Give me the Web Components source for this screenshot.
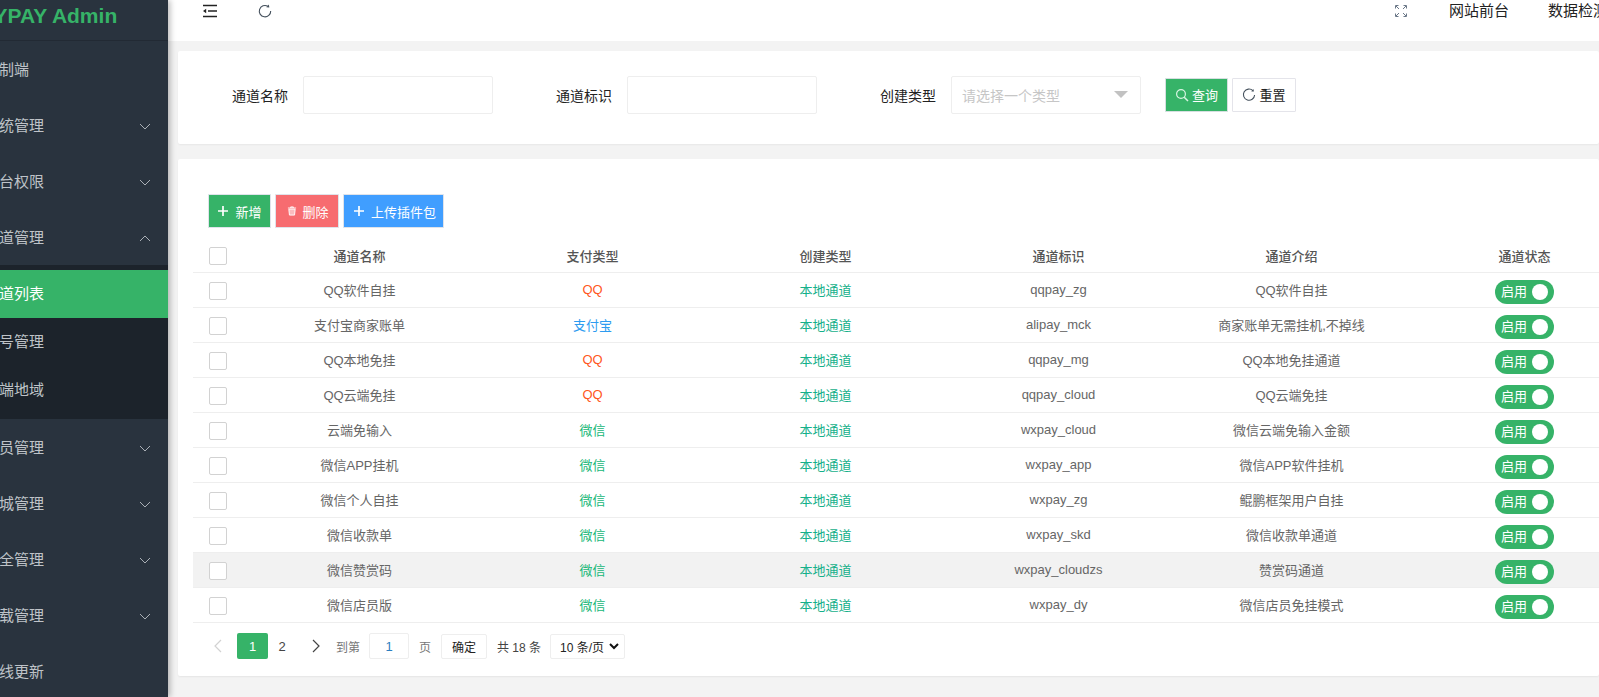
<!DOCTYPE html>
<html lang="zh"><head><meta charset="utf-8"><title>通道列表</title>
<style>
html,body{margin:0;padding:0;height:697px;overflow:hidden;background:#f3f3f3;font-family:"Liberation Sans","Noto Sans CJK SC",sans-serif;}
body{display:flex;align-items:stretch;width:1599px}
</style></head><body>
<admin-sidebar>
  <nav-item label="控制端"></nav-item>
  <nav-item label="系统管理" arrow="down"></nav-item>
  <nav-item label="平台权限" arrow="down"></nav-item>
  <nav-item label="通道管理" arrow="up"></nav-item>
  <nav-group>
    <nav-child label="通道列表" active></nav-child>
    <nav-child label="账号管理"></nav-child>
    <nav-child label="云端地域"></nav-child>
  </nav-group>
  <nav-item label="会员管理" arrow="down"></nav-item>
  <nav-item label="商城管理" arrow="down"></nav-item>
  <nav-item label="安全管理" arrow="down"></nav-item>
  <nav-item label="下载管理" arrow="down"></nav-item>
  <nav-item label="在线更新"></nav-item>
</admin-sidebar>
<admin-main>
  <top-bar></top-bar>
  <search-card></search-card>
  <table-card></table-card>
</admin-main>
<script>
const FONT='"Liberation Sans","Noto Sans CJK SC",sans-serif';
const ICON={
 plus:'<svg width="12" height="12" viewBox="0 0 12 12"><path d="M6 1v10M1 6h10" stroke="#fff" stroke-width="1.7" fill="none"/></svg>',
 trash:'<svg width="10" height="10" viewBox="0 0 11 11"><path d="M1 2.2h9M4 2V1h3v1M2 3.5h7L8.3 10H2.7z" stroke="#fff" stroke-width="1" fill="#fff" fill-opacity=".55"/></svg>',
 search:'<svg width="14" height="14" viewBox="0 0 14 14"><circle cx="6" cy="6" r="4.4" stroke="#d8f4e2" stroke-width="1.2" fill="none"/><path d="M9.2 9.2L13 13" stroke="#d8f4e2" stroke-width="1.5" fill="none"/></svg>',
 reload:c=>`<svg width="14" height="14" viewBox="0 0 14 14"><path d="M10.9 2.6A5.6 5.6 0 1 0 12.6 7" stroke="${c}" stroke-width="1.1" fill="none"/><path d="M9.3 3.6l2.6-.2L11.4.9z" fill="${c}"/></svg>`
};
function def(name,html){
  customElements.define(name,class extends HTMLElement{
    connectedCallback(){
      if(this.shadowRoot)return;
      const r=this.attachShadow({mode:'open'});
      r.innerHTML=typeof html==='function'?html(this):html;
    }
  });
}
def('admin-sidebar',`<style>
:host{display:block;flex:0 0 203px;width:203px;margin-left:-35px;height:697px;background:#29333e;color:#bfc3c8;overflow:hidden;position:relative;z-index:2;box-shadow:2px 0 6px rgba(0,0,0,.28);font:15px ${FONT}}
.logo{border-bottom:1px solid #222a34;display:flex;align-items:center;padding:0 0 8px 20px;box-sizing:content-box;height:32px;color:#36b368;font:bold 21px/32px "Liberation Sans",sans-serif;white-space:nowrap}
.logo span{margin-left:8.5px}
</style><div class="logo"><span>YPAY Admin</span></div><slot></slot>`);
def('nav-item',el=>{
 const a=el.getAttribute('arrow');
 const p=a==='up'?'M1 6l5-5 5 5':'M1 1l5 5 5-5';
 return `<style>:host{display:flex;align-items:center;justify-content:space-between;height:56px;padding:0 20px 0 19px;box-sizing:border-box;color:#bfc3c8;font:15px ${FONT}}
 span{margin-bottom:2px}
 svg{display:block;margin:3px -3px 0 0}</style><span>${el.getAttribute('label')}</span>${a?`<svg width="12" height="7" viewBox="0 0 12 7"><path d="${p}" stroke="#aab0b6" stroke-width="1" fill="none"/></svg>`:''}`;
});
def('nav-group',`<style>:host{display:block;background:#1c232b;padding:5px 0}</style><slot></slot>`);
def('nav-child',el=>`<style>:host{display:flex;align-items:center;height:48px;padding:0 0 4px 19px;box-sizing:border-box;color:#bfc3c8;font:15px ${FONT}}
:host([active]){background:#36b368;color:#fff}</style>${el.getAttribute('label')}`);
def('admin-main',`<style>:host{display:block;flex:1 1 0;min-width:0;height:697px;overflow:hidden}</style><slot></slot>`);
def('top-bar',`<style>
:host{display:flex;align-items:flex-start;height:41px;background:#fff;font:15px ${FONT};color:#222;position:relative}
.l{display:flex;align-items:center;height:21px;padding-left:35px;gap:41px}
.r{margin-left:auto;display:flex;align-items:center;height:22px;white-space:nowrap}
.r span{margin-left:39px;line-height:22px}
svg{display:block}
.fs{margin-right:3px}
.r{margin-right:-9px}
</style>
<div class="l">
<svg width="14" height="14" viewBox="0 0 14 14"><path d="M0 1.5h14M5 7h9M0 12.5h14" stroke="#222" stroke-width="1.5" fill="none"/><path d="M0 7l3.2-2.2v4.4z" fill="#222"/></svg>
<svg width="14" height="14" viewBox="0 0 14 14"><path d="M9.8 2.2A5.7 5.7 0 1 0 12.7 7" stroke="#44505c" stroke-width="1.1" fill="none"/><path d="M8.3 3.2l3 .2-.4-3z" fill="#44505c"/></svg>
</div>
<div class="r">
<svg class="fs" width="12" height="12" viewBox="0 0 12 12"><path d="M0.5 3.5v-3h3M1 1l3 3M11.5 3.5v-3h-3M11 1l-3 3M0.5 8.5v3h3M1 11l3-3M11.5 8.5v3h-3M11 11L8 8" stroke="#6b7888" stroke-width="1" fill="none"/></svg>
<span>网站前台</span><span>数据检测</span></div>`);
def('search-card',`<style>
:host{display:flex;align-items:center;margin:10px 0 15px 10px;height:93px;background:#fff;border-radius:2px;padding:0 15px 6px;box-shadow:0 1px 2px rgba(0,0,0,.05);font:14px ${FONT};color:#222;box-sizing:border-box}
label{width:95px;padding-right:15px;text-align:right;flex:none}
.in{width:190px;height:38px;box-sizing:border-box;border:1px solid #eee;border-radius:2px;background:#fff;flex:none;margin-right:24px;display:flex;align-items:center;justify-content:space-between;padding:0 10px;color:#c6c6c6}
i{display:block;width:0;height:0;border:7px solid transparent;border-top:7px solid #c2c2c2;border-bottom:0;margin-right:2px}
.b{height:34px;box-sizing:border-box;display:flex;align-items:center;justify-content:center;width:63px;border:1px solid #e4e4ea;font-size:13px;border-radius:1px;gap:3px;flex:none}
.g{background:#36b368;color:#fff;margin-right:4px;border-color:#d6dfe0}
.w{background:#fff;color:#222;width:64px}
</style>
<label>通道名称</label><div class="in"></div>
<label>通道标识</label><div class="in"></div>
<label>创建类型</label><div class="in"><span>请选择一个类型</span><i></i></div>
<div class="b g">${ICON.search}<span>查询</span></div><div class="b w">${ICON.reload('#44505c')}<span>重置</span></div>`);
const rows=[
['QQ软件自挂','QQ','q','qqpay_zg','QQ软件自挂'],
['支付宝商家账单','支付宝','a','alipay_mck','商家账单无需挂机,不掉线'],
['QQ本地免挂','QQ','q','qqpay_mg','QQ本地免挂通道'],
['QQ云端免挂','QQ','q','qqpay_cloud','QQ云端免挂'],
['云端免输入','微信','w','wxpay_cloud','微信云端免输入金额'],
['微信APP挂机','微信','w','wxpay_app','微信APP软件挂机'],
['微信个人自挂','微信','w','wxpay_zg','鲲鹏框架用户自挂'],
['微信收款单','微信','w','wxpay_skd','微信收款单通道'],
['微信赞赏码','微信','w','wxpay_cloudzs','赞赏码通道'],
['微信店员版','微信','w','wxpay_dy','微信店员免挂模式']];
def('table-card',`<style>
:host{display:block;margin-left:10px;height:517px;background:#fff;padding:35px 0 0 15px;box-sizing:border-box;box-shadow:0 1px 2px rgba(0,0,0,.06);font:13px ${FONT};color:#666;overflow:hidden;border-radius:2px}
.bar{display:flex;gap:4px;height:34px;padding-left:15px}
.bt{display:flex;align-items:center;justify-content:center;gap:6px;height:34px;box-sizing:border-box;border:1px solid #dfe3ea;color:#fff;font-size:13px;border-radius:1px}
.add{width:63px;background:#36b368}.del{width:64px;background:#f76c70;gap:5px;padding-left:2px}.up{width:101px;background:#409eff;gap:6px;padding-left:2px}
.t{width:1449px}
.r{display:grid;grid-template-columns:50px repeat(6,233px);height:35px;border-bottom:1px solid #eee;box-sizing:border-box;align-items:center;text-align:center}
.r>span{margin-bottom:2px}
.r.h{height:45px;font-weight:500;color:#555}
.r.h .cb{margin-top:12px}
.r.h>span{margin:10px 0 0}
.r.hov{background:#f2f2f2}
.cb{width:18px;height:18px;box-sizing:border-box;border:1px solid #d2d2d2;border-radius:2px;background:#fff;margin:2px 0 0 16px}
.q{color:#ff5722}.a{color:#2d9bf0}.w{color:#16b777}.l{color:#16b08a}
.r>span.s{margin:0;display:flex;justify-content:center;padding-top:3px}
.sw{display:flex;width:59px;height:24px;background:#36b368;border-radius:12px;color:#fff;align-items:center;justify-content:space-between;padding:0 6px;box-sizing:border-box}
.sw b{display:block;width:16px;height:16px;border-radius:50%;background:#fff}.sw span{font-weight:400;margin-bottom:2px}
</style>
<div class="bar"><div class="bt add">${ICON.plus}<span>新增</span></div><div class="bt del">${ICON.trash}<span>删除</span></div><div class="bt up">${ICON.plus}<span>上传插件包</span></div></div>
<div class="t"><div class="r h"><div class="cb"></div><span>通道名称</span><span>支付类型</span><span>创建类型</span><span>通道标识</span><span>通道介绍</span><span>通道状态</span></div>
${rows.map((r,i)=>`<div class="r${i==8?' hov':''}"><div class="cb"></div><span>${r[0]}</span><span class="${r[2]}">${r[1]}</span><span class="l">本地通道</span><span>${r[3]}</span><span>${r[4]}</span><span class="s"><span class="sw"><span>启用</span><b></b></span></span></div>`).join('')}
</div><page-bar></page-bar>`);
def('page-bar',`<style>
:host{display:flex;align-items:center;height:26px;margin-top:10px;padding-left:20px;font:12px ${FONT};color:#777;white-space:nowrap}
svg{display:block}
.cur{width:31px;height:26px;background:#36b368;color:#fff;border-radius:2px;display:flex;align-items:center;justify-content:center;margin-left:14px;font-size:13px}
.n{width:28px;text-align:center;color:#444;font-size:13px}
.next{margin:0 15px 0 15px}
.inp{width:40px;height:26px;box-sizing:border-box;border:1px solid #eee;border-radius:2px;display:flex;align-items:center;justify-content:center;color:#2b7fc0;margin:0 10px 0 9px;font-size:13px}
.ok{width:46px;height:25px;box-sizing:border-box;border:1px solid #eee;border-radius:2px;display:flex;align-items:center;justify-content:center;color:#222;margin:0 10px}
.tot{color:#444}
.sel{width:75px;height:25px;box-sizing:border-box;border:1px solid #eee;border-radius:2px;display:flex;align-items:center;justify-content:space-between;margin-left:9px;padding:0 5px 0 9px;color:#222}
</style>
<svg width="10" height="14" viewBox="0 0 10 14"><path d="M8 1L2 7l6 6" stroke="#d2d2d2" stroke-width="1.2" fill="none"/></svg>
<div class="cur">1</div><div class="n">2</div>
<svg class="next" width="10" height="14" viewBox="0 0 10 14"><path d="M2 1l6 6-6 6" stroke="#444" stroke-width="1.2" fill="none"/></svg>
<span>到第</span><div class="inp">1</div><span>页</span><div class="ok">确定</div><span class="tot">共 18 条</span>
<div class="sel"><span>10 条/页</span><svg width="10" height="7" viewBox="0 0 10 7"><path d="M1 1l4 4 4-4" stroke="#111" stroke-width="2" fill="none"/></svg></div>`);
</script></body></html>
